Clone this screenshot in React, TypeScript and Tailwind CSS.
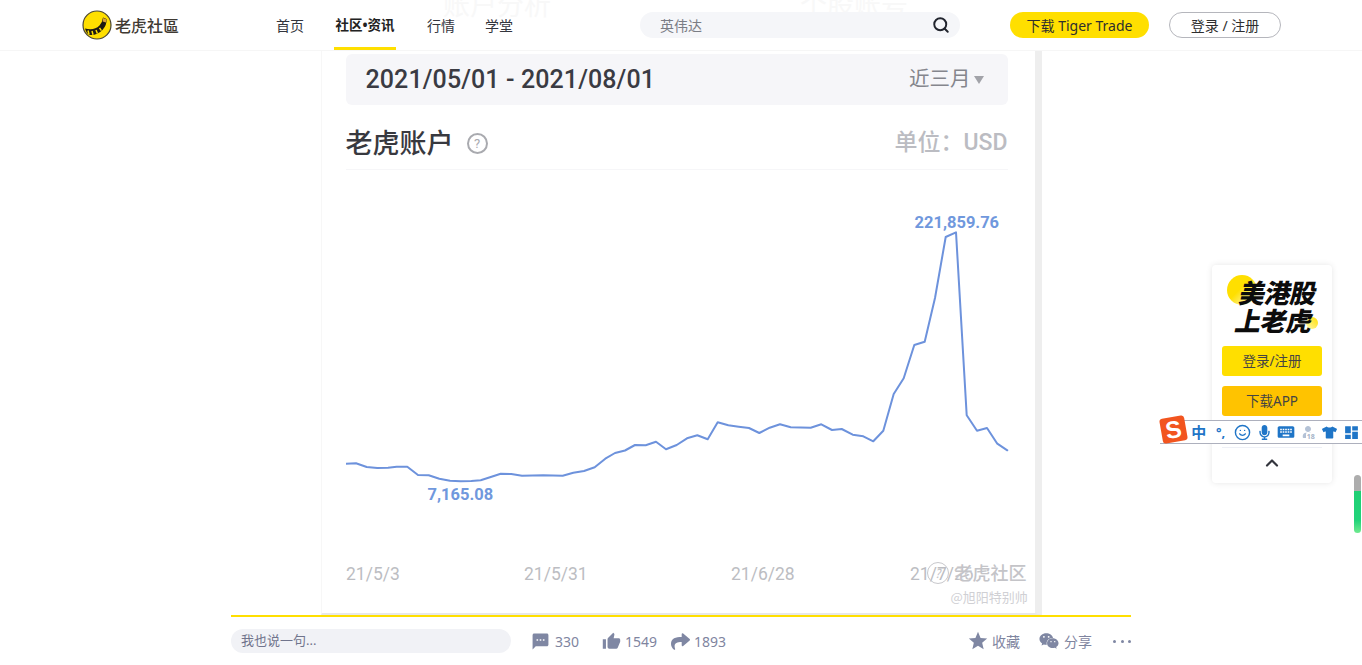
import React from "react";
import { MdSms, MdThumbUp, MdStar, MdKeyboard, MdDashboard } from "react-icons/md";
import { FaShare, FaWeixin, FaTshirt, FaMicrophone, FaUser } from "react-icons/fa";
import { Search, ChevronUp, Smile } from "lucide-react";

const points = [
  [345.3,465.7],[356,465.3],[366.7,469],[377.3,470],[388,469.7],[396.7,468.7],[407.3,468.7],[418,477],[428.7,477.3],[439.3,480.7],[450,482.7],[460.7,483.3],[471.3,483],[480.7,482.3],[490,479.3],[500.7,475.7],[511.3,476],[522,477.7],[543.3,477.3],[562.7,477.7],[573.3,474.7],[584,473],[594.7,469.3],[605.3,460.7],[615,455],[625,452.5],[635,447],[645.7,447.3],[656,443.7],[666,451.3],[676.7,447],[687,440.3],[697.3,437.3],[707.7,441.3],[717.7,424.3],[728.3,427.3],[738.7,428.7],[749,430],[759.3,435],[769.7,429.7],[780,426.3],[790.7,429.3],[810.7,429.7],[821.3,426.3],[832,432],[841.7,431],[852.7,436.7],[863.3,438.3],[873.3,443.3],[883.3,432.7],[893.7,396],[903.7,380.3],[914.3,347],[924.7,343.7],[935,300],[945.7,239],[956,234.3],[966.7,417.3],[977,432.7],[987,430],[997.3,445.7],[1007.3,452.3],
];

function TigerLogo() {
  return (
    <svg width="30" height="30" viewBox="0 0 30 30" className="shrink-0">
      <circle cx="15" cy="15" r="14" fill="#ffdf00" stroke="#4a4536" strokeWidth="1.2" />
      <path d="M3 18.5 Q12 21 17.5 15.5 Q20.5 12 21 7.5 L24.5 9 Q25 15 20.5 20 Q15 25.5 8 25 Q4.5 24 3 18.5Z" fill="#1d1a12" />
      <path d="M21.2 8 L24.3 9.3 L24 12.5 L20.6 11.4Z" fill="#d9a13a" />
      <path d="M6 20.5 L7 24.4 M10 21 L11 24.8 M14 20 L15.4 23.6 M17.5 17.8 L19.4 20.6" stroke="#ffdf00" strokeWidth="1.5" />
    </svg>
  );
}

function SmallStat({ icon, text, cls }: { icon: React.ReactNode; text: string; cls: string }) {
  return (
    <div className={`flex items-center ${cls}`}>
      {icon}
      <span>{text}</span>
    </div>
  );
}

export default function App() {
  return (
    <div className="relative h-[665px] w-full overflow-hidden bg-white [font-family:'Noto_Sans','Noto_Sans_CJK_SC',sans-serif]">
      {/* header */}
      <header className="relative h-[51px] border-b border-[#f6f6f6] bg-white">
        <span className="absolute left-[443px] top-[-12px] text-[27px] leading-[34px] tracking-[0px] text-[#f8f8f8]">账户分析</span>
        <span className="absolute left-[800px] top-[-12px] text-[27px] leading-[34px] text-[#f8f8f8]">个股账号</span>
        <div className="relative flex h-[50px] items-center pl-[82px]">
          <TigerLogo />
          <span className="ml-[3px] w-[64px] text-[16px] font-medium text-[#3f3a33] [font-family:'Noto_Sans_CJK_TC',sans-serif]">老虎社區</span>
          <nav className="ml-[97px] flex h-[50px] text-[14px] text-[#33353d]">
            <a className="flex w-[28px] items-center whitespace-nowrap">首页</a>
            <a className="ml-[30px] flex w-[62px] items-center justify-center whitespace-nowrap border-b-[3px] border-[#ffdf00] pt-[3px] text-[13.5px] font-bold text-[#222]">社区•资讯</a>
            <a className="ml-[31px] flex w-[28px] items-center whitespace-nowrap">行情</a>
            <a className="ml-[30px] flex w-[28px] items-center whitespace-nowrap">学堂</a>
          </nav>
          <div className="ml-[127px] flex h-[26px] w-[320px] items-center justify-between rounded-[13px] bg-[#f5f6f9] pl-[20px] pr-[10px] text-[14px] text-[#7b7d85]">
            <span>英伟达</span>
            <Search size={18} strokeWidth={2.6} className="text-[#22252e]" />
          </div>
          <button className="ml-[50px] flex h-[26px] w-[139px] items-center justify-center rounded-[13px] bg-[#ffdf00] text-[14px] text-[#2e2e2e]">下载 Tiger Trade</button>
          <button className="ml-[20px] flex h-[26px] w-[112px] items-center justify-center rounded-[13px] border border-[#b5b6bc] text-[14px] text-[#2e2e2e]">登录 / 注册</button>
        </div>
      </header>

      {/* article */}
      <main className="mx-auto w-[900px]">
        <div className="mx-auto h-[564px] w-[721px] border-b-[2px] border-l border-r-[7px] border-b-[#e8e8e8] border-l-[#f7f7f7] border-r-[#eeeeee] [font-family:Roboto,'Noto_Sans_CJK_SC',sans-serif]">
          <div className="relative h-full pl-[24px]">
            <div className="pt-[3px]">
              <div className="flex h-[51px] w-[662px] items-center justify-between rounded-[6px] bg-[#f6f6f9] pl-[20px] pr-[24px]">
                <span className="text-[25px] font-medium tracking-[0.1px] text-[#3a3b43]">2021/05/01 - 2021/08/01</span>
                <div className="flex items-center text-[#85868d]">
                  <span className="text-[20.5px]">近三月</span>
                  <span className="ml-[3px] h-0 w-0 border-x-[5.5px] border-t-[8px] border-x-transparent border-t-[#a2a3a9]" />
                </div>
              </div>
              <div className="flex h-[65px] w-[662px] items-center justify-between border-b border-[#f6f6f8] pt-[13px]">
                <div className="flex items-center">
                  <span className="text-[27px] font-medium leading-[36px] text-[#38393f]">老虎账户</span>
                  <span className="ml-[13px] flex h-[21px] w-[21px] items-center justify-center rounded-full border-2 border-[#a9aaaf] text-[13px] leading-none text-[#a9aaaf]">?</span>
                </div>
                <span className="text-[23px] font-medium text-[#bbbcc2]">单位：USD</span>
              </div>
            </div>
            <svg
              width="689"
              height="440"
              viewBox="346 172 689 440"
              className="block"
            >
              <polyline
                points={points.map((p) => p.join(",")).join(" ")}
                fill="none"
                stroke="#6d92dc"
                strokeWidth="2"
                strokeLinejoin="round"
                strokeLinecap="round"
              />
              <text x="914.5" y="230" fontSize="16.5" fontWeight="700" fill="#7098dd">221,859.76</text>
              <text x="427.5" y="502" fontSize="16.5" fontWeight="700" fill="#7098dd">7,165.08</text>
              <g fontSize="17.5" fill="#bcbdc2">
                <text x="346" y="582">21/5/3</text>
                <text x="524" y="582">21/5/31</text>
                <text x="731" y="582">21/6/28</text>
                <text x="910" y="582">21/7/26</text>
              </g>
            </svg>
            {/* watermark */}
            <div className="absolute left-[605px] top-[508px] flex items-center [font-family:'Noto_Sans_CJK_SC',sans-serif]">
              <span className="flex h-[22px] w-[22px] items-center justify-center rounded-full border border-[#c8c8cc] text-[12px] italic text-[#c4c4c8]">?</span>
              <span className="ml-[6px] whitespace-nowrap text-[18px] font-medium text-[#c4c4c8] [text-shadow:0_0_2px_#fff]">老虎社区</span>
            </div>
            <span className="absolute left-[629px] top-[536px] whitespace-nowrap text-[13px] text-[#d0d0d4] [font-family:'Noto_Sans_CJK_SC',sans-serif]">@旭阳特别帅</span>
          </div>
        </div>

        {/* bottom bar */}
        <div className="flex h-[50px] items-center border-t-2 border-[#ffdf00] text-[14px] text-[#7f859f]">
          <div className="flex h-[24px] w-[280px] items-center rounded-[12px] bg-[#f1f2f6] pl-[10px] text-[13px] text-[#70748c]">我也说一句...</div>
          <SmallStat cls="ml-[20px]" icon={<MdSms size={19} className="mr-[5px] text-[#7f87a3]" />} text="330" />
          <SmallStat cls="ml-[23px]" icon={<MdThumbUp size={19} className="mr-[4px] text-[#7f87a3]" />} text="1549" />
          <SmallStat cls="ml-[14px]" icon={<FaShare size={19} className="mr-[4px] text-[#7f87a3]" />} text="1893" />
          <div className="ml-auto flex items-center">
            <SmallStat cls="" icon={<MdStar size={22} className="mr-[3px] text-[#7f87a3]" />} text="收藏" />
            <SmallStat cls="ml-[19px]" icon={<FaWeixin size={20} className="mr-[5px] text-[#7f87a3]" />} text="分享" />
            <div className="ml-[21px] flex w-[18px] justify-between">
              <span className="h-[3px] w-[3px] rounded-full bg-[#7f87a3]" />
              <span className="h-[3px] w-[3px] rounded-full bg-[#7f87a3]" />
              <span className="h-[3px] w-[3px] rounded-full bg-[#7f87a3]" />
            </div>
          </div>
        </div>
      </main>

      {/* side widget */}
      <aside className="absolute left-[1212px] top-[265px] flex h-[218px] w-[120px] flex-col items-center rounded-[4px] bg-white px-[10px] shadow-[0_0_6px_rgba(0,0,0,0.10)]">
        <div className="relative h-[81px] w-[100px]">
          <span className="absolute left-[5px] top-[10px] h-[30px] w-[30px] rounded-full bg-[linear-gradient(135deg,#ffdf00_45%,#fff7b0_85%)]" />
          <span className="absolute left-[84px] top-[52px] h-[12px] w-[12px] rounded-full bg-[linear-gradient(45deg,#fff7b0,#ffdf00)]" />
          <span className="absolute left-[18px] top-[11px] origin-left -skew-x-12 whitespace-nowrap text-[26px] font-black leading-[34px] tracking-[-0.5px] text-[#0c0c0c]">美港股</span>
          <span className="absolute left-[14px] top-[39px] origin-left -skew-x-12 whitespace-nowrap text-[26px] font-black leading-[34px] tracking-[-0.5px] text-[#0c0c0c]">上老虎</span>
        </div>
        <button className="flex h-[30px] w-[100px] shrink-0 items-center justify-center rounded-[3px] bg-[#ffdf00] text-[13.5px] text-[#444]">登录/注册</button>
        <button className="mt-[10px] flex h-[30px] w-[100px] shrink-0 items-center justify-center rounded-[3px] bg-[#ffc300] text-[13.5px] text-[#444]">下载APP</button>
        <div className="mt-[31px] h-px w-[100px] bg-[#eef0f6]" />
        <ChevronUp size={20} strokeWidth={2.6} className="mt-[5px] text-[#33353d]" />
      </aside>

      {/* IME toolbar */}
      <div className="absolute left-[1160px] top-[420px] flex h-[24px] w-[202px] items-center border-y border-[#adb0bd] bg-white pl-[28px] text-[#1f75c7]">
        <span className="absolute left-[1px] top-[-4px] flex h-[25px] w-[25px] -rotate-[10deg] items-center justify-center rounded-[3px] bg-[#f2551f] text-[24px] font-black leading-none text-white [font-family:'Liberation_Sans',sans-serif]">S</span>
        <span className="flex w-[22px] justify-center text-[15px] font-bold leading-none">中</span>
        <span className="flex w-[22px] justify-center text-[13px] font-bold leading-none">°,</span>
        <span className="flex w-[22px] justify-center"><Smile size={17} strokeWidth={2} /></span>
        <span className="flex w-[22px] justify-center"><FaMicrophone size={15} /></span>
        <span className="flex w-[22px] justify-center"><MdKeyboard size={20} /></span>
        <span className="relative flex w-[22px] justify-center text-[#b4c2d6]">
          <FaUser size={12} />
          <span className="absolute left-[9px] top-[7px] rounded-[1px] bg-white px-[1px] text-[7px] font-bold leading-[7px] text-[#a5b3c8]">18</span>
        </span>
        <span className="flex w-[22px] justify-center"><FaTshirt size={15} /></span>
        <span className="flex w-[22px] justify-center"><MdDashboard size={17} /></span>
      </div>

      {/* scrollbar widget */}
      <div className="absolute left-[1354px] top-[475px] flex h-[58px] w-[7px] flex-col overflow-hidden rounded-[4px]">
        <div className="h-[16px] bg-[#adadad]" />
        <div className="flex-1 bg-[linear-gradient(180deg,#1fcf74,#22d37a_70%,#70ea8f)]" />
      </div>
    </div>
  );
}
